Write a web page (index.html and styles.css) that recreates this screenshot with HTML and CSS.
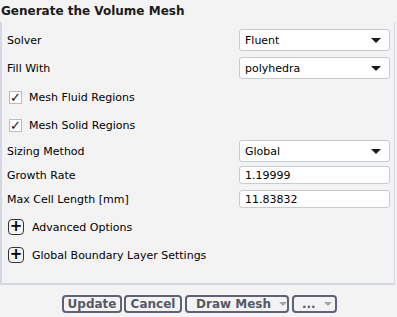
FILE: index.html
```html
<!DOCTYPE html>
<html lang="en">
<head>
    <meta charset="UTF-8">
    <title>Generate the Volume Mesh</title>
    <link rel="stylesheet" href="styles.css">
</head>
<body>
    <h2 class="title">Generate the Volume Mesh</h2>
    <div class="panel">
        <div class="row">
            <span class="label">Solver</span>
            <div class="select"><span>Fluent</span><i class="caret"></i></div>
        </div>
        <div class="row">
            <span class="label">Fill With</span>
            <div class="select"><span>polyhedra</span><i class="caret"></i></div>
        </div>
        <div class="check first">
            <span class="box">&#10003;</span>
            <span>Mesh Fluid Regions</span>
        </div>
        <div class="check">
            <span class="box">&#10003;</span>
            <span>Mesh Solid Regions</span>
        </div>
        <div class="row sizing">
            <span class="label">Sizing Method</span>
            <div class="select"><span>Global</span><i class="caret"></i></div>
        </div>
        <div class="row small">
            <span class="label">Growth Rate</span>
            <div class="input">1.19999</div>
        </div>
        <div class="row small last">
            <span class="label">Max Cell Length [mm]</span>
            <div class="input">11.83832</div>
        </div>
        <div class="expand">
            <span class="plus">+</span>
            <span>Advanced Options</span>
        </div>
        <div class="expand">
            <span class="plus">+</span>
            <span>Global Boundary Layer Settings</span>
        </div>
    </div>
    <div class="buttons">
        <button class="btn">Update</button>
        <button class="btn">Cancel</button>
        <button class="btn drop">Draw Mesh <i class="mini"></i></button>
        <button class="btn drop">... <i class="mini"></i></button>
    </div>
</body>
</html>
```

FILE: styles.css
```css
body{
    margin: 0;
    width: 397px;
    height: 317px;
    background: #f3f3f3;
    font-family: Tahoma, "DejaVu Sans", sans-serif;
    font-size: 11px;
    color: #000;
    overflow: hidden;
}
.title{
    margin: 0;
    padding: 4px 0 0 1px;
    height: 18px;
    font-size: 12px;
    font-weight: bold;
    color: #1a1a1a;
}
.panel{
    box-sizing: border-box;
    width: 395px;
    height: 263px;
    border-left: 2px solid #d4d8e2;
    border-right: 1px solid #d4d8e2;
    border-bottom: 2px solid #d4d8e2;
    padding: 7px 4px 0 3px;
}
.row{
    display: flex;
    align-items: center;
    justify-content: space-between;
    height: 22px;
    margin-bottom: 6px;
}
.row.sizing{
    margin-bottom: 4px;
}
.row.small{
    height: 18px;
    margin-bottom: 6px;
}
.row.small.last{
    margin-bottom: 8px;
}
.label{
    padding-left: 2px;
}
.select, .input{
    box-sizing: border-box;
    width: 151px;
    height: 100%;
    background: #fff;
    border: 1px solid #c6cad2;
    border-radius: 3px;
    display: flex;
    align-items: center;
    justify-content: space-between;
    padding: 0 8px 0 5px;
}
.caret{
    width: 0;
    height: 0;
    border-left: 5px solid transparent;
    border-right: 5px solid transparent;
    border-top: 5px solid #1a1a1a;
}
.check, .expand{
    display: flex;
    align-items: center;
    gap: 7px;
    height: 22px;
    margin-bottom: 6px;
    padding-left: 4px;
}
.check.first{
    margin-top: 7px;
}
.check:not(.first){
    margin-bottom: 4px;
}
.box{
    box-sizing: border-box;
    width: 13px;
    height: 13px;
    border: 1px solid #b8bcc4;
    background: #fff;
    font-size: 13px;
    line-height: 11px;
    text-align: center;
    font-weight: bold;
    color: #111;
}
.expand{
    padding-left: 3px;
    gap: 8px;
}
.plus{
    box-sizing: border-box;
    width: 16px;
    height: 16px;
    border: 1px solid #333;
    border-radius: 4px;
    font-size: 15px;
    line-height: 13px;
    text-align: center;
    font-weight: bold;
}
.buttons{
    display: flex;
    gap: 2px;
    padding: 10px 0 0 62px;
}
.btn{
    box-sizing: border-box;
    height: 18px;
    padding: 0 4px;
    background: #f3f3f3;
    border: 2px solid #5d6373;
    border-radius: 4px;
    font-family: inherit;
    font-size: 12px;
    font-weight: bold;
    color: #555a66;
    line-height: 14px;
    white-space: nowrap;
    display: flex;
    align-items: center;
    gap: 8px;
}
.btn:nth-child(1){ width: 60px; justify-content: center; }
.btn:nth-child(2){ width: 58px; justify-content: center; }
.btn:nth-child(3){ width: 104px; margin-left: 1px; padding-left: 9px; }
.btn:nth-child(4){ width: 45px; margin-left: 1px; padding-left: 8px; }
.mini{
    margin-left: auto;
    width: 0;
    height: 0;
    border-left: 4px solid transparent;
    border-right: 4px solid transparent;
    border-top: 4px solid #a0a4ac;
}
```
